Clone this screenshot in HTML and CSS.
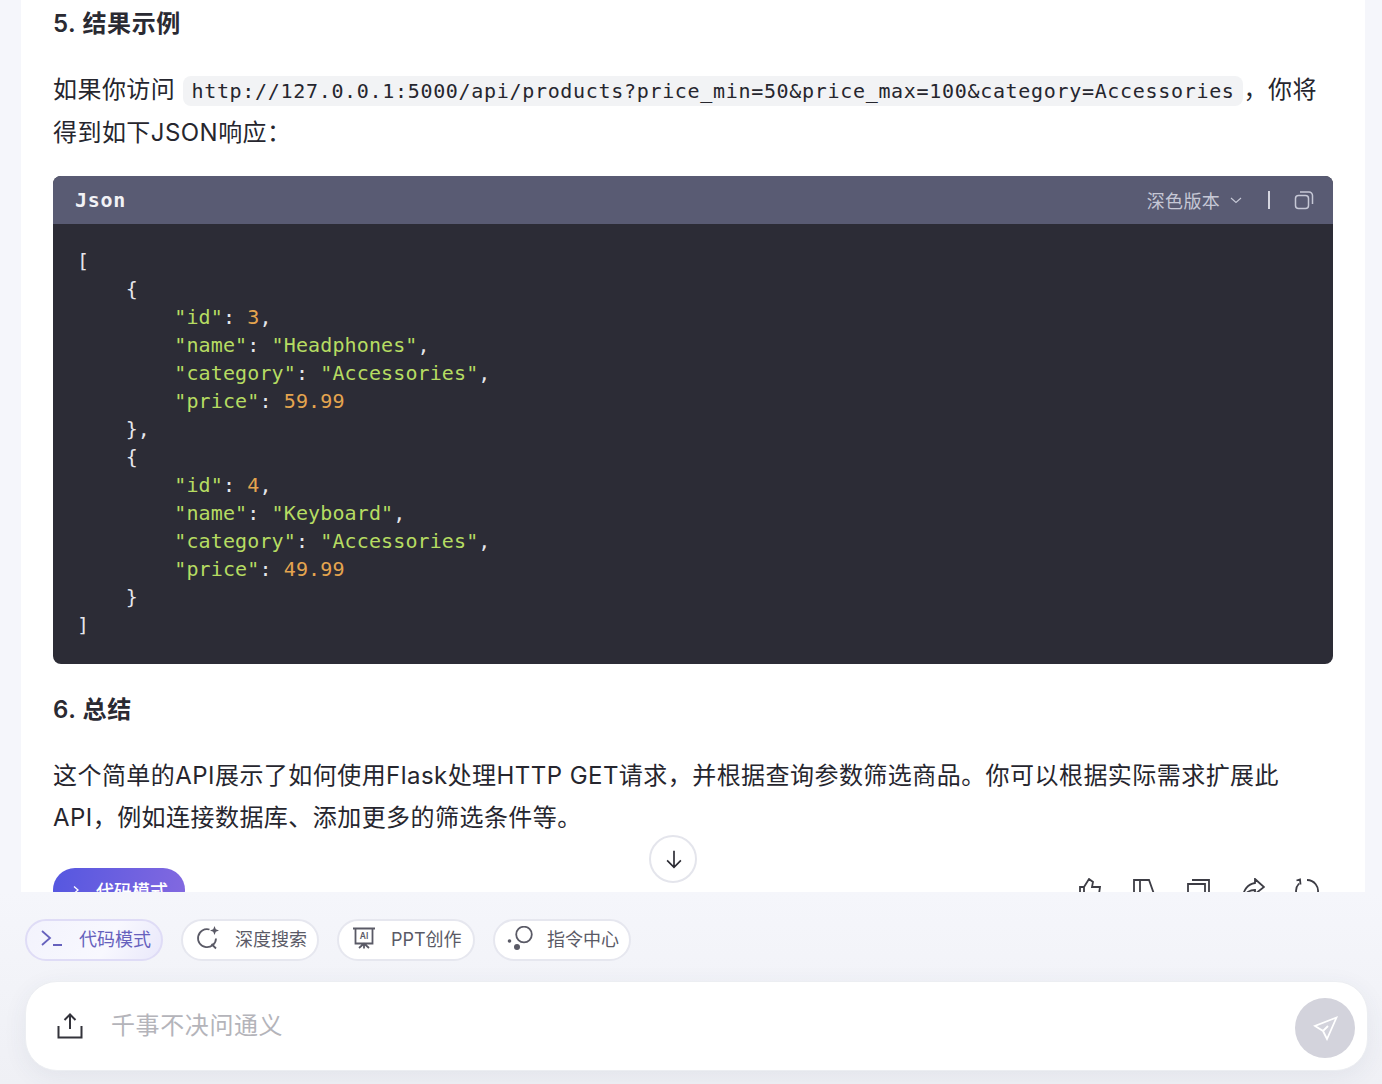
FILE: index.html
```html
<!DOCTYPE html>
<html lang="zh">
<head>
<meta charset="utf-8">
<title>千事不决问通义</title>
<link rel="stylesheet" href="styles.css">
</head>
<body>
<main class="chat">
  <article class="card">
    <h3 class="heading">5. 结果示例</h3>
    <p class="para">如果你访问 <code class="inline">http://127.0.0.1:5000/api/products?price_min=50&amp;price_max=100&amp;category=Accessories</code>，你将得到如下JSON响应：</p>
    <section class="codebox">
      <header class="codehead">
        <span class="lang">Json</span>
        <div class="tools">
          <span class="theme">深色版本</span>
          <svg class="chev" viewBox="0 0 12 12"><path d="M1 4l5 4.500L11 4"/></svg>
          <span class="sep"></span>
          <svg class="copy" viewBox="0 0 20 20"><rect x="1.500" y="5.500" width="13" height="13" rx="3"/><path d="M6 2h9a3.500 3.500 0 0 1 3.500 3.500V14"/></svg>
        </div>
      </header>
<pre class="code">[
    {
        <b>"id"</b>: <i>3</i>,
        <b>"name"</b>: <b>"Headphones"</b>,
        <b>"category"</b>: <b>"Accessories"</b>,
        <b>"price"</b>: <i>59.99</i>
    },
    {
        <b>"id"</b>: <i>4</i>,
        <b>"name"</b>: <b>"Keyboard"</b>,
        <b>"category"</b>: <b>"Accessories"</b>,
        <b>"price"</b>: <i>49.99</i>
    }
]</pre>
    </section>
    <h3 class="heading">6. 总结</h3>
    <p class="para">这个简单的API展示了如何使用Flask处理HTTP GET请求，并根据查询参数筛选商品。你可以根据实际需求扩展此API，例如连接数据库、添加更多的筛选条件等。</p>
    <div class="actions">
      <button class="modebtn"><svg viewBox="0 0 14 14"><path d="M4 3.500 8 7l-4 3.500"/></svg>代码模式</button>
      <div class="acticons">
        <svg viewBox="0 0 26 26"><path d="M3 9h4v14H3zM7 9l5-8 4 3-1 5h8l-2 14H7"/></svg>
        <svg viewBox="0 0 26 26"><path d="M3 2h6v14H3zM9 2h9l5 14h-8l-1 7"/></svg>
        <svg viewBox="0 0 26 26"><path d="M3 6h17v18H3zM7 2h17v18"/></svg>
        <svg viewBox="0 0 26 26"><path d="M16 1l9 8-9 7v-4c-5 0-10 3-12 8 0-8 5-14 12-15z"/></svg>
        <svg viewBox="0 0 26 26"><path d="M14 2a11 11 0 1 1-8 3.500M3.500 2.500 7 1.500l.5 5"/></svg>
      </div>
    </div>
  </article>
  <button class="down" aria-label="到底部"><svg viewBox="0 0 24 24"><path d="M12 3v18M4.500 13.500 12 21l7.500-7.500"/></svg></button>
</main>
<footer class="footer">
  <nav class="chips">
    <button class="chip active"><svg class="chipicon" viewBox="0 0 24 24"><path d="M2 5l8 7-8 7M13 19h9"/></svg>代码模式</button>
    <button class="chip"><svg class="chipicon" viewBox="0 0 24 24"><path d="M13.500 3.500a9 9 0 1 0 6.500 9M15.500 18l4.500 4.500"/><path class="fill" d="M18.500 0l1.300 3.200L23 4.500l-3.200 1.300L18.500 9l-1.300-3.200L14 4.500l3.200-1.300z"/></svg>深度搜索</button>
    <button class="chip"><svg class="chipicon" viewBox="0 0 24 24"><path d="M1 2.500h22M3.500 2.500v15h17v-15M12 17.500v5M7 22l5-4.500 5 4.500"/><text class="ai" x="12" y="12.500" text-anchor="middle">AI</text></svg>PPT创作</button>
    <button class="chip"><svg class="chipicon wide" viewBox="0 0 26 24"><circle cx="17" cy="8.500" r="7.800"/><circle class="fill" cx="10" cy="21" r="3"/><circle class="fill" cx="2.500" cy="15" r="1.800"/></svg>指令中心</button>
  </nav>
  <div class="composer">
    <svg class="upload" viewBox="0 0 28 28"><path d="M14 17V3M8.500 8 14 2.500 19.500 8M2.500 14v11.500h23V14"/></svg>
    <span class="placeholder">千事不决问通义</span>
    <button class="send" aria-label="发送"><svg viewBox="0 0 26 26"><path d="M24.500 2.500 3 11l8 5 4 8zM11 16l5-5"/></svg></button>
  </div>
</footer>
</body>
</html>
```

FILE: styles.css
```css
* { box-sizing: border-box; }
html, body { margin: 0; height: 1084px; overflow: hidden; }
body {
  background: #f5f6fb;
  color: #26262e;
  font-family: Inter, "Noto Sans CJK SC", "Noto Sans", sans-serif;
  width: 1382px;
}
button { font: inherit; border: 0; padding: 0; }
svg { fill: none; stroke: currentColor; display: block; }

.chat { position: relative; height: 892px; overflow: hidden; padding-left: 21px; padding-right: 17px; }
.card { background: #fff; height: 100%; padding: 8px 32px 0; }

.heading { margin: 0 0 29px; font-size: 24px; line-height: 32px; font-weight: 600; letter-spacing: .6px; color: #2a2a32; }
.para { margin: 0; font-size: 24px; line-height: 42px; letter-spacing: .45px; color: #26262e; }
.inline {
  font-family: "DejaVu Sans Mono", monospace;
  font-size: 20px;
  letter-spacing: .68px;
  background: #f2f3f5;
  border-radius: 8px;
  padding: 3px 8px;
  margin: 0 1px;
}

.codebox { margin-top: 22px; margin-bottom: 30px; border-radius: 8px; overflow: hidden; background: #2c2c36; }
.codehead { height: 48px; background: #595b73; display: flex; align-items: center; justify-content: space-between; padding: 0 19px 0 22px; color: #fff; }
.lang { font-family: "DejaVu Sans Mono", monospace; font-size: 20px; font-weight: 700; color: #f2f2f6; letter-spacing: .7px; }
.tools { display: flex; align-items: center; color: #c6c8d6; font-size: 18px; }
.theme { letter-spacing: .3px; }
.chev { width: 12px; height: 12px; stroke-width: 1.100; margin-left: 10px; }
.sep { width: 2px; height: 18px; background: #d5d6e0; margin: 0 24px 0 26px; }
.copy { width: 20px; height: 20px; stroke-width: 1.500; }
.code {
  margin: 0;
  padding: 23px 24px 25px;
  font-family: "DejaVu Sans Mono", monospace;
  font-size: 20px;
  letter-spacing: .12px;
  line-height: 28px;
  color: #e6e6ec;
}
.code b { font-weight: 400; color: #b6dc62; }
.code i { font-style: normal; color: #e5a54f; }

.actions { display: flex; justify-content: space-between; margin-top: -1px; padding-top: 30px; }
.modebtn {
  height: 44px; width: 132px; border-radius: 22px; color: #fff; font-size: 18px; font-weight: 500;
  background: linear-gradient(100deg, #5557e0, #8369e0);
  display: flex; align-items: center; justify-content: center; gap: 12px;
}
.modebtn svg { width: 14px; height: 14px; stroke-width: 1.300; }
.acticons { display: flex; gap: 28px; padding: 10px 14px 0 0; color: #3d3d45; }
.acticons svg { width: 26px; height: 26px; stroke-width: 1.800; }

.down {
  position: absolute; left: 649px; top: 835px; width: 48px; height: 48px; border-radius: 50%;
  background: #fff; border: 2px solid #e4e5ec; display: flex; align-items: center; justify-content: center; color: #2a2a32;
}
.down svg { width: 22px; height: 22px; stroke-width: 1.800; margin-left: 2px; }

.footer { height: 192px; padding: 27px 14px 0 25px; background: linear-gradient(#f5f6fb, #eff0f5); }
.chips { display: flex; gap: 18px; }
.chip {
  width: 138px; height: 42px; border-radius: 21px; background: #fff; border: 2px solid #e6e7ef;
  display: flex; align-items: center; padding: 0 0 4px 13px; gap: 15px; font-size: 18px; color: #5a5a66;
}
.chip.active {
  background: linear-gradient(120deg, #f3f3fd, #f8f8fe 60%, #e9e8fb);
  border-color: #dfdcf6; color: #6661bd;
}
.chipicon { width: 24px; height: 24px; stroke-width: 1.800; flex: none; }
.chipicon.wide { width: 26px; margin: 0 -1px; }
.fill { fill: currentColor; stroke: none; }
.ai { font-size: 8.500px; font-weight: 600; fill: currentColor; stroke: none; }

.composer {
  height: 90px; margin-top: 20px; background: #fff; border-radius: 32px; border: 1px solid #eceef2;
  box-shadow: 0 6px 24px rgba(60, 65, 95, .07);
  display: flex; align-items: center; padding: 0 12px 0 30px;
}
.upload { width: 28px; height: 28px; stroke-width: 2; color: #33333b; flex: none; }
.placeholder { margin-left: 27px; padding-bottom: 6px; font-size: 24px; letter-spacing: .6px; color: #b4b4ba; flex: 1; }
.send { width: 60px; height: 60px; margin-top: 4px; border-radius: 50%; background: #d3d3dc; color: #fff; display: flex; align-items: center; justify-content: center; }
.send svg { width: 26px; height: 26px; stroke-width: 1.800; }
```
